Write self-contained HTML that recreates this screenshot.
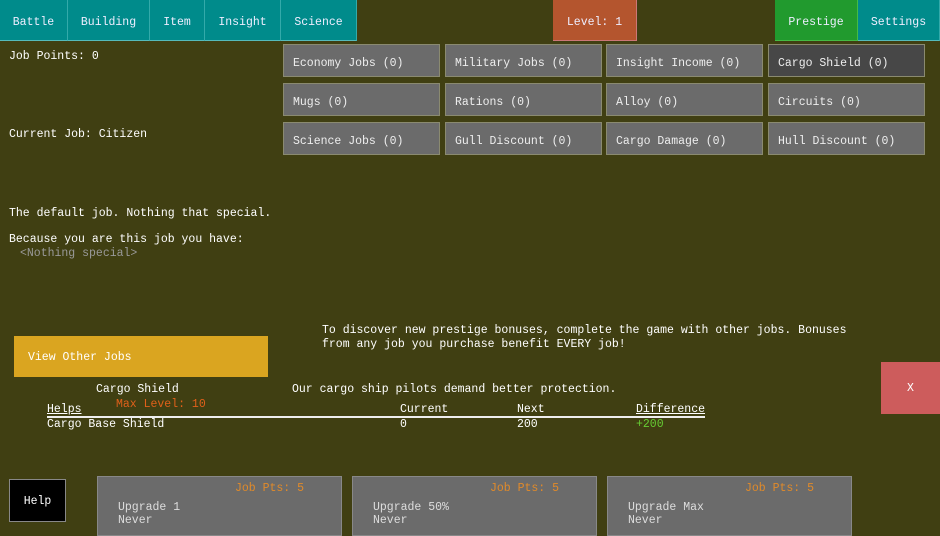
<!DOCTYPE html>
<html><head><style>
*{margin:0;padding:0;box-sizing:border-box}
body{width:940px;height:529px;background:#403f12;font-family:"Liberation Mono","DejaVu Sans Mono",monospace;font-size:11.5px;color:#fff;position:relative;overflow:hidden}
.a{position:absolute;white-space:nowrap}
.nav{position:absolute;top:0;height:41px;background:#008b8b;border-right:1px solid #3aa;border-bottom:1px solid #5bb;line-height:46px;text-align:center;color:#eef}
.b{position:absolute;width:157px;height:33px;background:#6b6b6b;border:1px solid #8a8a70;line-height:33px;padding-left:9px;padding-top:2px;color:#eee}
.u{position:absolute;top:476px;width:245px;height:60px;background:#6b6b6b;border:1px solid #888;color:#ddd}
.u .p{position:absolute;top:5px;left:137px;color:#e08a2a}
.u .t{position:absolute;top:24px;left:20px;line-height:13px}
</style></head><body>
<div class="nav" style="left:0;width:68px">Battle</div>
<div class="nav" style="left:68px;width:82px">Building</div>
<div class="nav" style="left:150px;width:55px">Item</div>
<div class="nav" style="left:205px;width:76px">Insight</div>
<div class="nav" style="left:281px;width:76px">Science</div>
<div class="nav" style="left:553px;width:84px;background:#b4552e;border-color:#c77">Level: 1</div>
<div class="nav" style="left:775px;width:83px;background:#219a2e;border-color:#4b4">Prestige</div>
<div class="nav" style="left:858px;width:82px">Settings</div>

<div class="a" style="left:9px;top:50px">Job Points: 0</div>
<div class="a" style="left:9px;top:128px">Current Job: Citizen</div>
<div class="a" style="left:9px;top:207px">The default job. Nothing that special.</div>
<div class="a" style="left:9px;top:233px">Because you are this job you have:</div>
<div class="a" style="left:20px;top:247px;color:#999">&lt;Nothing special&gt;</div>

<div class="b" style="left:283px;top:44px">Economy Jobs (0)</div>
<div class="b" style="left:445px;top:44px">Military Jobs (0)</div>
<div class="b" style="left:606px;top:44px">Insight Income (0)</div>
<div class="b" style="left:768px;top:44px;background:#474747">Cargo Shield (0)</div>
<div class="b" style="left:283px;top:83px">Mugs (0)</div>
<div class="b" style="left:445px;top:83px">Rations (0)</div>
<div class="b" style="left:606px;top:83px">Alloy (0)</div>
<div class="b" style="left:768px;top:83px">Circuits (0)</div>
<div class="b" style="left:283px;top:122px">Science Jobs (0)</div>
<div class="b" style="left:445px;top:122px">Gull Discount (0)</div>
<div class="b" style="left:606px;top:122px">Cargo Damage (0)</div>
<div class="b" style="left:768px;top:122px">Hull Discount (0)</div>

<div class="a" style="left:322px;top:324px;line-height:14px">To discover new prestige bonuses, complete the game with other jobs. Bonuses<br>from any job you purchase benefit EVERY job!</div>
<div class="a" style="left:14px;top:336px;width:254px;height:41px;background:#daa520;line-height:43px;padding-left:14px">View Other Jobs</div>
<div class="a" style="left:881px;top:362px;width:59px;height:52px;background:#cd5c5c;line-height:54px;text-align:center">X</div>

<div class="a" style="left:96px;top:383px">Cargo Shield</div>
<div class="a" style="left:292px;top:383px">Our cargo ship pilots demand better protection.</div>
<div class="a" style="left:116px;top:398px;color:#e0601a">Max Level: 10</div>
<div class="a" style="left:47px;top:403px;text-decoration:underline">Helps</div>
<div class="a" style="left:400px;top:403px">Current</div>
<div class="a" style="left:517px;top:403px">Next</div>
<div class="a" style="left:636px;top:403px;text-decoration:underline">Difference</div>
<div class="a" style="left:47px;top:416px;width:658px;height:2px;background:#eee"></div>
<div class="a" style="left:47px;top:418px">Cargo Base Shield</div>
<div class="a" style="left:400px;top:418px">0</div>
<div class="a" style="left:517px;top:418px">200</div>
<div class="a" style="left:636px;top:418px;color:#6c3">+200</div>

<div class="a" style="left:9px;top:479px;width:57px;height:43px;background:#000;border:1px solid #888;line-height:43px;text-align:center">Help</div>
<div class="u" style="left:97px"><span class="p">Job Pts: 5</span><span class="t">Upgrade 1<br>Never</span></div>
<div class="u" style="left:352px"><span class="p">Job Pts: 5</span><span class="t">Upgrade 50%<br>Never</span></div>
<div class="u" style="left:607px"><span class="p">Job Pts: 5</span><span class="t">Upgrade Max<br>Never</span></div>
</body></html>
